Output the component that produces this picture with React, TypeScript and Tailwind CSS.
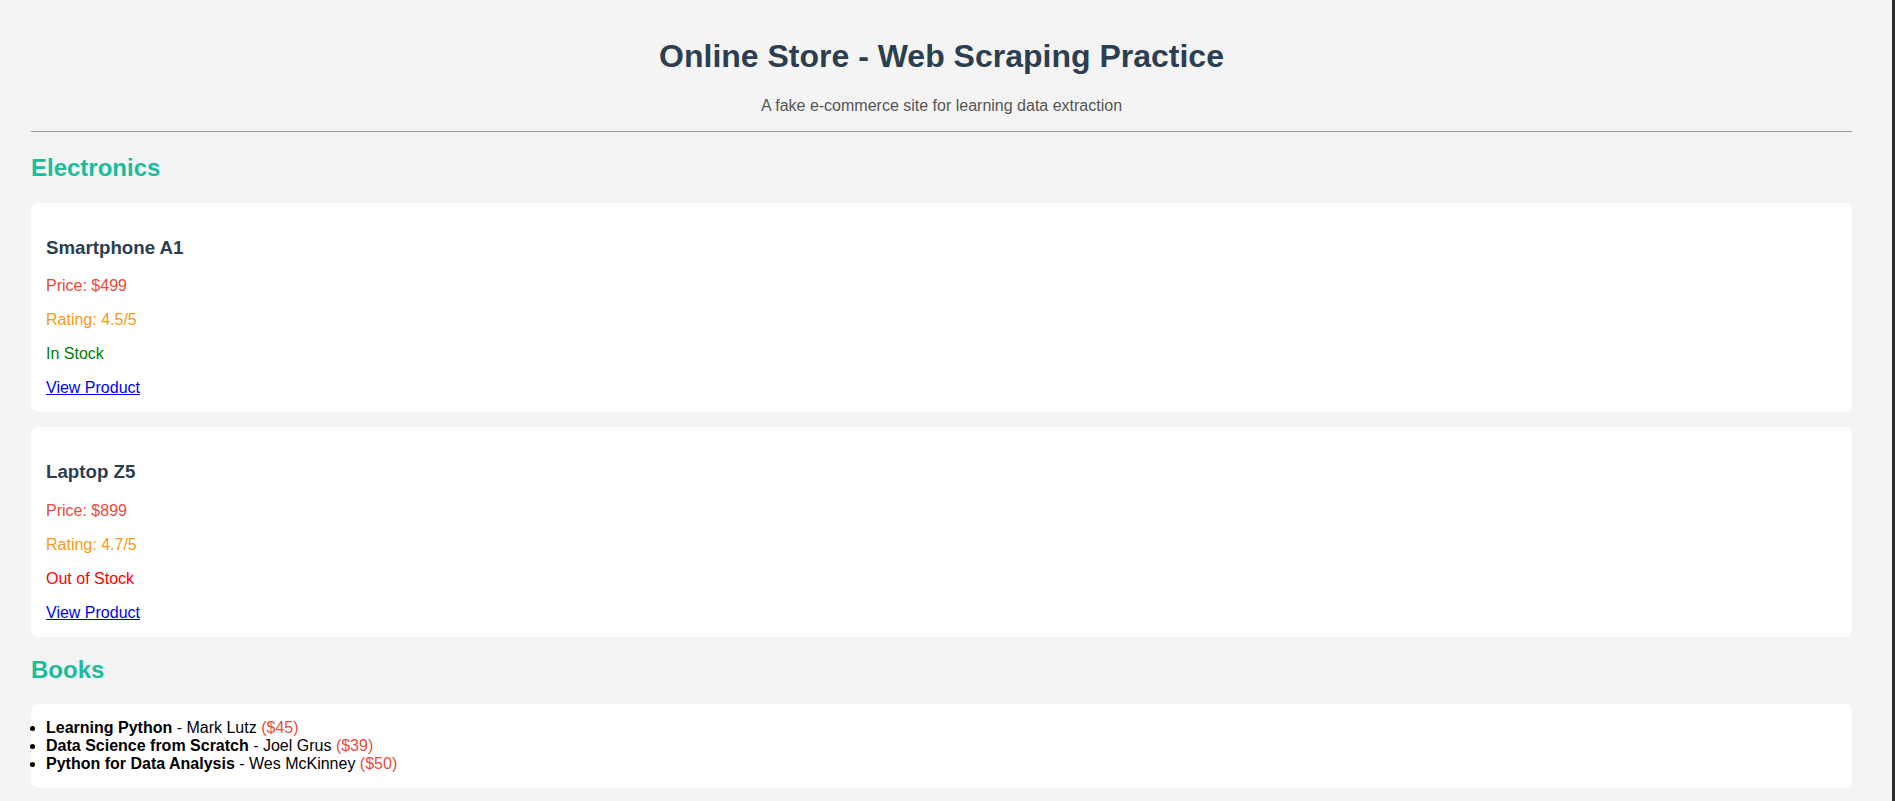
import React from "react";

type Product = {
  name: string;
  price: string;
  rating: string;
  inStock: boolean;
};

const products: Product[] = [
  { name: "Smartphone A1", price: "$499", rating: "4.5/5", inStock: true },
  { name: "Laptop Z5", price: "$899", rating: "4.7/5", inStock: false },
];

const books = [
  { title: "Learning Python", author: "Mark Lutz", price: "$45" },
  { title: "Data Science from Scratch", author: "Joel Grus", price: "$39" },
  { title: "Python for Data Analysis", author: "Wes McKinney", price: "$50" },
];

function ProductCard({ p }: { p: Product }) {
  return (
    <div className="bg-white rounded-lg p-[15px] mb-[15px]">
      <h3 className="text-[18.72px] font-bold text-[#2c3e50] my-[18.72px]">{p.name}</h3>
      <p className="text-[#e74c3c] my-4">Price: {p.price}</p>
      <p className="text-[#f39c12] my-4">Rating: {p.rating}</p>
      {p.inStock ? (
        <p className="text-[#008000] my-4">In Stock</p>
      ) : (
        <p className="text-[#ff0000] my-4">Out of Stock</p>
      )}
      <div>
        <a href="#" className="text-[#0000ee] underline">
          View Product
        </a>
      </div>
    </div>
  );
}

export default function App() {
  return (
    <div className="flex min-h-screen bg-[#f4f4f4] font-['Liberation_Sans',Arial,sans-serif] text-[16px] leading-[normal] text-black">
      <main className="flex-1 min-w-0 pl-[31px] pr-[40px] pt-[38px] pb-10">
        <header className="text-center">
          <h1 className="text-[32px] font-bold text-[#2c3e50] m-0">Online Store - Web Scraping Practice</h1>
          <p className="text-[#555] mt-[22px] mb-4">A fake e-commerce site for learning data extraction</p>
        </header>
        <div className="h-px bg-[#9a9a9a]" />
        <h2 className="text-[24px] font-bold text-[#1abc9c] mt-[22px] mb-[21px]">Electronics</h2>
        {products.map((p) => (
          <ProductCard key={p.name} p={p} />
        ))}
        <h2 className="text-[24px] font-bold text-[#1abc9c] mt-[19px] mb-5">Books</h2>
        <div className="bg-white rounded-lg p-[15px] mb-[15px]">
          <ul className="list-disc list-outside m-0 p-0">
            {books.map((b) => (
              <li key={b.title}>
                <strong className="font-bold">{b.title}</strong> - {b.author}{" "}
                <span className="text-[#e74c3c]">({b.price})</span>
              </li>
            ))}
          </ul>
        </div>
      </main>
      <div className="w-[3px] shrink-0 bg-[#2b2b2b]" />
    </div>
  );
}
